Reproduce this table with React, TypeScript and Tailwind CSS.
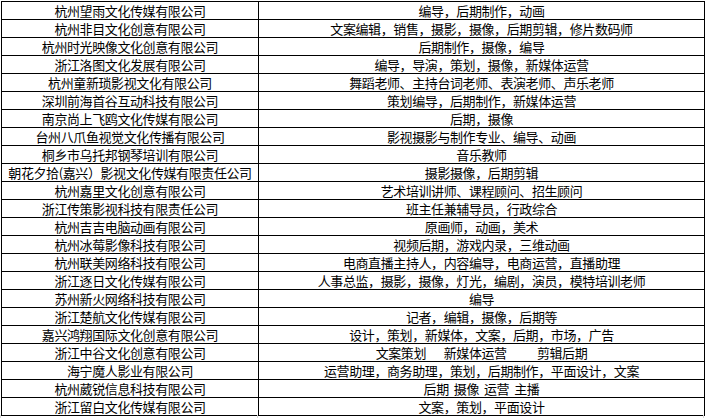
const rows: [string, string][] = [
  ["杭州望雨文化传媒有限公司", "编导，后期制作，动画"],
  ["杭州非目文化创意有限公司", "文案编辑，销售，摄影，摄像，后期剪辑，修片数码师"],
  ["杭州时光映像文化创意有限公司", "后期制作，摄像，编导"],
  ["浙江洛图文化发展有限公司", "编导，导演，策划，摄像，新媒体运营"],
  ["杭州童新琐影视文化有限公司", "舞蹈老师、主持台词老师、表演老师、声乐老师"],
  ["深圳前海首谷互动科技有限公司", "策划编导，后期制作，新媒体运营"],
  ["南京尚上飞鸥文化传媒有限公司", "后期，摄像"],
  ["台州八爪鱼视觉文化传播有限公司", "影视摄影与制作专业、编导、动画"],
  ["桐乡市乌托邦钢琴培训有限公司", "音乐教师"],
  ["朝花夕拾(嘉兴）影视文化传媒有限责任公司", "摄影摄像，后期剪辑"],
  ["杭州嘉里文化创意有限公司", "艺术培训讲师、课程顾问、招生顾问"],
  ["浙江传策影视科技有限责任公司", "班主任兼辅导员，行政综合"],
  ["杭州吉吉电脑动画有限公司", "原画师，动画，美术"],
  ["杭州冰莓影像科技有限公司", "视频后期，游戏内录，三维动画"],
  ["杭州联美网络科技有限公司", "电商直播主持人，内容编导，电商运营，直播助理"],
  ["浙江逐日文化传媒有限公司", "人事总监，摄影，摄像，灯光，编剧，演员，模特培训老师"],
  ["苏州新火网络科技有限公司", "编导"],
  ["浙江楚航文化传媒有限公司", "记者，编辑，摄像，后期等"],
  ["嘉兴鸿翔国际文化创意有限公司", "设计，策划，新媒体，文案，后期，市场，广告"],
  ["浙江中谷文化创意有限公司", "文案策划\u3000  新媒体运营\u3000\u3000  剪辑后期"],
  ["海宁魔人影业有限公司", "运营助理，商务助理，策划，后期制作，平面设计，文案"],
  ["杭州葳锐信息科技有限公司", "后期  摄像  运营  主播"],
  ["浙江留白文化传媒有限公司", "文案，策划，平面设计"],
];

export default function App() {
  return (
    <div
      className="w-[707px] h-[418px] overflow-hidden bg-white text-black"
      style={{ fontFamily: '"Noto Sans CJK SC", "Noto Sans", sans-serif' }}
    >
      <div className="ml-[1px] mt-[1px] w-[704px] border-l border-t border-black">
        {rows.map(([company, job]) => (
          <div key={company} className="flex h-[18px]">
            <div className="w-[257px] shrink-0 border-r border-b border-black flex items-center justify-center text-[13px] tracking-[-0.4px] leading-none whitespace-pre">
              {company}
            </div>
            <div className="w-[446px] shrink-0 border-r border-b border-black flex items-center justify-center text-[13px] tracking-[-0.4px] leading-none whitespace-pre">
              {job}
            </div>
          </div>
        ))}
      </div>
      <div className="-mt-[1px] flex h-[4px]">
        <div className="w-[258px] border-r border-l border-[#d4d4d4]" />
        <div className="w-[446px] border-r border-[#d4d4d4]" />
      </div>
    </div>
  );
}
